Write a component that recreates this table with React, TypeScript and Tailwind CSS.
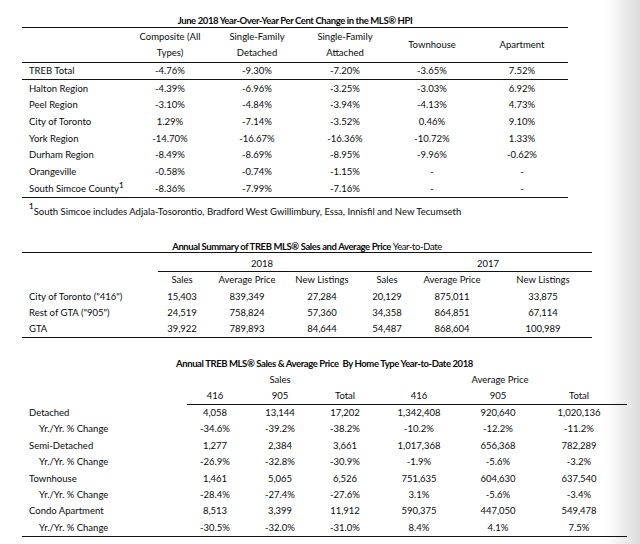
const hpiHead = ['Composite (All Types)', 'Single-Family Detached', 'Single-Family Attached', 'Townhouse', 'Apartment']

const hpiRows = [
  ['Halton Region', '-4.39%', '-6.96%', '-3.25%', '-3.03%', '6.92%'],
  ['Peel Region', '-3.10%', '-4.84%', '-3.94%', '-4.13%', '4.73%'],
  ['City of Toronto', '1.29%', '-7.14%', '-3.52%', '0.46%', '9.10%'],
  ['York Region', '-14.70%', '-16.67%', '-16.36%', '-10.72%', '1.33%'],
  ['Durham Region', '-8.49%', '-8.69%', '-8.95%', '-9.96%', '-0.62%'],
  ['Orangeville', '-0.58%', '-0.74%', '-1.15%', '-', '-'],
]

const summaryRows = [
  ['City of Toronto ("416")', '15,403', '839,349', '27,284', '20,129', '875,011', '33,875'],
  ['Rest of GTA ("905")', '24,519', '758,824', '57,360', '34,358', '864,851', '67,114'],
  ['GTA', '39,922', '789,893', '84,644', '54,487', '868,604', '100,989'],
]

const typeRows = [
  ['Detached', '4,058', '13,144', '17,202', '1,342,408', '920,640', '1,020,136'],
  ['Yr./Yr. % Change', '-34.6%', '-39.2%', '-38.2%', '-10.2%', '-12.2%', '-11.2%'],
  ['Semi-Detached', '1,277', '2,384', '3,661', '1,017,368', '656,368', '782,289'],
  ['Yr./Yr. % Change', '-26.9%', '-32.8%', '-30.9%', '-1.9%', '-5.6%', '-3.2%'],
  ['Townhouse', '1,461', '5,065', '6,526', '751,635', '604,630', '637,540'],
  ['Yr./Yr. % Change', '-28.4%', '-27.4%', '-27.6%', '3.1%', '-5.6%', '-3.4%'],
  ['Condo Apartment', '8,513', '3,399', '11,912', '590,375', '447,050', '549,478'],
  ['Yr./Yr. % Change', '-30.5%', '-32.0%', '-31.0%', '8.4%', '4.1%', '7.5%'],
]

const Cell = ({ children }: { children: React.ReactNode }) => (
  <div className="flex justify-center whitespace-nowrap">{children}</div>
)

const HpiTable = () => {
  const grid = 'grid grid-cols-[106px_84px_90px_86px_88px_92px] items-center'
  return (
    <div className="ml-[22px] w-[546px]">
      <div className="h-[27px] flex items-end justify-center pb-[2px] font-bold tracking-[-0.4px]">
        June 2018 Year-Over-Year Per Cent Change in the MLS® HPI
      </div>
      <div className={`${grid} h-[36px] border-y-[1.5px] border-[#111] leading-[16px]`}>
        <div />
        {hpiHead.map((h) => (
          <div key={h} className="text-center px-2">{h}</div>
        ))}
      </div>
      <div className={`${grid} h-[17px] border-b-[1.5px] border-[#111]`}>
        <div className="pl-[7px]">TREB Total</div>
        <Cell>-4.76%</Cell>
        <Cell>-9.30%</Cell>
        <Cell>-7.20%</Cell>
        <Cell>-3.65%</Cell>
        <Cell>7.52%</Cell>
      </div>
      {hpiRows.map((r) => (
        <div key={r[0]} className={`${grid} h-[16.7px]`}>
          <div className="pl-[7px] whitespace-nowrap">{r[0]}</div>
          {r.slice(1).map((v, i) => (
            <Cell key={i}>{v}</Cell>
          ))}
        </div>
      ))}
      <div className={`${grid} h-[18px] border-b-[1.5px] border-[#111]`}>
        <div className="pl-[7px] whitespace-nowrap">
          South Simcoe County<sup className="text-[8px] font-semibold">1</sup>
        </div>
        <Cell>-8.36%</Cell>
        <Cell>-7.99%</Cell>
        <Cell>-7.16%</Cell>
        <Cell>-</Cell>
        <Cell>-</Cell>
      </div>
      <div className="pl-[7px] h-[23px] flex items-center whitespace-nowrap">
        <sup className="text-[8px] font-semibold">1</sup>
        <span className="pt-[4px]">South Simcoe includes Adjala-Tosorontio, Bradford West Gwillimbury, Essa, Innisfil and New Tecumseth</span>
      </div>
    </div>
  )
}

const SummaryTable = () => {
  const grid = 'grid grid-cols-[130px_60px_70px_80px_50px_80px_102px] items-center'
  return (
    <div className="ml-[22px] w-[570px] mt-[14px]">
      <div className="h-[17px] flex items-end justify-center pb-[1px] tracking-[-0.4px]">
        <span className="font-bold">Annual Summary of TREB MLS® Sales and Average Price</span>
        <span>&nbsp;Year-to-Date</span>
      </div>
      <div className="border-t-[1.5px] border-[#111]">
        <div className="grid grid-cols-[130px_220px_232px] h-[17.5px] items-end pb-[2px]">
          <div />
          <Cell>2018</Cell>
          <Cell>2017</Cell>
        </div>
        <div className="ml-[136px] border-t-[1.5px] border-[#111]" />
        <div className={`${grid} h-[17px]`}>
          <div />
          {['Sales', 'Average Price', 'New Listings', 'Sales', 'Average Price', 'New Listings'].map((h, i) => (
            <Cell key={i}>{h}</Cell>
          ))}
        </div>
        <div className="border-b-[1.5px] border-[#111]">
          {summaryRows.map((r) => (
            <div key={r[0]} className={`${grid} h-[16px]`}>
              <div className="pl-[7px] whitespace-nowrap">{r[0]}</div>
              {r.slice(1).map((v, i) => (
                <Cell key={i}>{v}</Cell>
              ))}
            </div>
          ))}
        </div>
      </div>
    </div>
  )
}

const TypeTable = () => {
  const grid = 'grid grid-cols-[165px_56px_74px_56px_92px_66px_96px] items-center'
  return (
    <div className="ml-[22px] w-[605px] mt-[18px]">
      <div className="h-[16px] flex items-center justify-center font-bold tracking-[-0.4px] whitespace-pre">
        Annual TREB MLS® Sales &amp; Average Price  By Home Type Year-to-Date 2018
      </div>
      <div className="grid grid-cols-[165px_186px_254px] h-[16px] items-center">
        <div />
        <Cell>Sales</Cell>
        <Cell>Average Price</Cell>
      </div>
      <div className={`${grid} h-[16px]`}>
        <div />
        {['416', '905', 'Total', '416', '905', 'Total'].map((h, i) => (
          <Cell key={i}>{h}</Cell>
        ))}
      </div>
      <div className="ml-[165px] border-t-[1.5px] border-[#111]" />
      <div className="border-b-[1.5px] border-[#111]">
        {typeRows.map((r, idx) => (
          <div key={idx} className={`${grid} h-[16.4px]`}>
            <div className={idx % 2 === 1 ? 'pl-[17px] whitespace-nowrap' : 'pl-[7px] whitespace-nowrap'}>{r[0]}</div>
            {r.slice(1).map((v, i) => (
              <Cell key={i}>{v}</Cell>
            ))}
          </div>
        ))}
      </div>
    </div>
  )
}

const App = () => {
  return (
    <div className="w-[640px] h-[544px] overflow-hidden text-[9.5px] leading-none text-[#0a0a0a] font-[Lato,sans-serif] bg-[linear-gradient(to_right,#ffffff_606px,#dcdcdc_640px)]">
      <HpiTable />
      <SummaryTable />
      <TypeTable />
    </div>
  )
}

export default App
